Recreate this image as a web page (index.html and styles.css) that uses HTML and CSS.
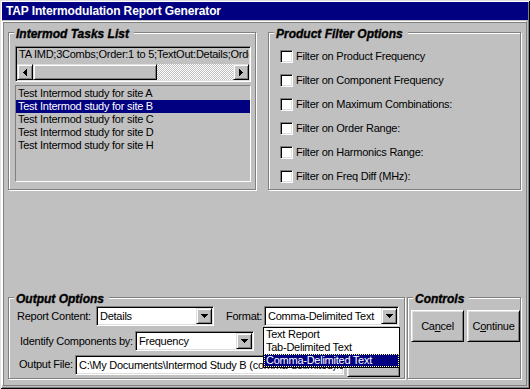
FILE: index.html
```html
<!DOCTYPE html>
<html>
<head>
<meta charset="utf-8">
<title>TAP Intermodulation Report Generator</title>
<link rel="stylesheet" href="styles.css">
</head>
<body>
<div class="window">
  <div class="titlebar">TAP Intermodulation Report Generator</div>
  <div class="client">
    <div class="top-row">
      <section class="group tasks">
        <span class="legend">Intermod Tasks List</span>
        <div class="scrollbox">
          <div class="scrolltext">TA IMD;3Combs;Order:1 to 5;TextOut:Details;Order:Ascending</div>
          <div class="hscroll">
            <span class="sbtn"><svg width="4" height="7" viewBox="0 0 4 7"><path d="M3 0h1v7h-1zM2 1h1v5h-1zM1 2h1v3h-1zM0 3h1v1h-1z"/></svg></span>
            <span class="thumb"></span>
            <span class="track"></span>
            <span class="sbtn"><svg width="4" height="7" viewBox="0 0 4 7"><path d="M0 0h1v7h-1zM1 1h1v5h-1zM2 2h1v3h-1zM3 3h1v1h-1z"/></svg></span>
          </div>
        </div>
        <ul class="listbox">
          <li>Test Intermod study for site A</li>
          <li class="sel">Test Intermod study for site B</li>
          <li>Test Intermod study for site C</li>
          <li>Test Intermod study for site D</li>
          <li>Test Intermod study for site H</li>
        </ul>
      </section>
      <section class="group filters">
        <span class="legend">Product Filter Options</span>
        <ul class="checks">
          <li><span class="checkbox"></span>Filter on Product Frequency</li>
          <li><span class="checkbox"></span>Filter on Component Frequency</li>
          <li><span class="checkbox"></span>Filter on Maximum Combinations:</li>
          <li><span class="checkbox"></span>Filter on Order Range:</li>
          <li><span class="checkbox"></span>Filter on Harmonics Range:</li>
          <li><span class="checkbox"></span>Filter on Freq Diff (MHz):</li>
        </ul>
      </section>
    </div>
    <div class="bottom-row">
      <section class="group output">
        <span class="legend">Output Options</span>
        <div class="row row1">
          <span class="label lbl-content">Report Content:</span>
          <div class="combo combo-content"><span class="value">Details</span><span class="dbtn"><svg width="7" height="4" viewBox="0 0 7 4"><path d="M0 0h7v1H0zM1 1h5v1H1zM2 2h3v1H2zM3 3h1v1H3z"/></svg></span></div>
          <span class="label lbl-format">Format:</span>
          <div class="combo combo-format"><span class="value">Comma-Delimited Text</span><span class="dbtn"><svg width="7" height="4" viewBox="0 0 7 4"><path d="M0 0h7v1H0zM1 1h5v1H1zM2 2h3v1H2zM3 3h1v1H3z"/></svg></span>
            <ul class="dropdown">
              <li>Text Report</li>
              <li>Tab-Delimited Text</li>
              <li class="sel">Comma-Delimited Text</li>
            </ul>
          </div>
        </div>
        <div class="row row2">
          <span class="label lbl-ident">Identify Components by:</span>
          <div class="combo combo-ident"><span class="value">Frequency</span><span class="dbtn"><svg width="7" height="4" viewBox="0 0 7 4"><path d="M0 0h7v1H0zM1 1h5v1H1zM2 2h3v1H2zM3 3h1v1H3z"/></svg></span></div>
        </div>
        <div class="row row3">
          <span class="label lbl-file">Output File:</span>
          <div class="textbox"><span class="value">C:\My Documents\Intermod Study B (comma-delimited).txt</span></div>
          <button class="btn browse" type="button"></button>
        </div>
      </section>
      <section class="group controls">
        <span class="legend">Controls</span>
        <div class="buttons">
          <button class="btn" type="button">Ca<u>n</u>cel</button>
          <button class="btn" type="button">C<u>o</u>ntinue</button>
        </div>
      </section>
    </div>
  </div>
</div>
</body>
</html>
```
FILE: styles.css
```css
* { box-sizing: border-box; }
html, body { margin: 0; padding: 0; }
body {
  width: 530px; height: 389px; overflow: hidden;
  background: #c0c0c0;
  font-family: "Liberation Sans", Arial, sans-serif;
  font-size: 11px; letter-spacing: -0.25px; color: #000;
}
ul { list-style: none; margin: 0; padding: 0; }

.window {
  width: 530px; height: 389px; padding: 2px;
  display: flex; flex-direction: column;
  background: #c0c0c0;
  box-shadow: inset 1px 1px 0 #dfdfdf, inset -1px -1px 0 #000,
              inset 2px 2px 0 #fff, inset -2px -2px 0 #808080;
}
.titlebar {
  height: 18px; flex: none;
  background: #000080; color: #fff;
  font-weight: bold; font-size: 12px; letter-spacing: -0.13px;
  line-height: 18px; padding-left: 4px; white-space: nowrap;
}
.client {
  flex: 1;
  margin: 1px 1px 1px 0;
  border: 1px solid; border-color: #fff #808080 #808080 #fff;
  box-shadow: inset 1px 1px 0 #808080;
  padding: 10px 5px 6px 5px;
  display: flex; flex-direction: column; justify-content: space-between;
}

/* group boxes */
.group {
  position: relative;
  border: 1px solid #808080;
  box-shadow: 1px 1px 0 #fff, inset 1px 1px 0 #fff;
}
.legend {
  position: absolute; top: -6px; left: 5px;
  background: #c0c0c0;
  padding: 0 5px 0 2px;
  font-weight: bold; font-style: italic; font-size: 12px;
  letter-spacing: 0; line-height: 14px;
  -webkit-text-stroke: 0.35px #000;
  white-space: nowrap;
}
.top-row { display: grid; grid-template-columns: 248px 253px; column-gap: 12px; }
.top-row .group { height: 158px; }
.bottom-row { display: grid; grid-template-columns: 397px 114px; column-gap: 2px; }
.bottom-row .group { height: 82px; }

/* sunken / raised helpers */
.scrollbox, .combo, .textbox, .checkbox {
  border: 1px solid; border-color: #808080 #fff #fff #808080;
  box-shadow: inset 1px 1px 0 #000, inset -1px -1px 0 #dfdfdf;
  padding: 1px;
}
.sbtn, .thumb, .dbtn {
  border: 1px solid; border-color: #dfdfdf #000 #000 #dfdfdf;
  box-shadow: inset 1px 1px 0 #fff, inset -1px -1px 0 #808080;
  background: #c0c0c0;
}

/* tasks list */
.scrollbox { margin: 13px 0 0 6px; width: 236px; height: 36px; }
.scrolltext {
  height: 16px; line-height: 13px; padding-left: 2px;
  white-space: nowrap; overflow: hidden;
}
.hscroll { display: flex; height: 16px; }
.sbtn {
  flex: none; width: 16px; height: 16px;
  display: flex; align-items: center; justify-content: center;
}
.sbtn svg, .dbtn svg { display: block; shape-rendering: crispEdges; }
.thumb { flex: none; width: 124px; height: 16px; }
.track {
  flex: 1; height: 16px;
  background: repeating-conic-gradient(#fff 0 25%, #c0c0c0 0 50%) 0 0 / 2px 2px;
}
.listbox {
  margin: 3px 0 0 6px; width: 236px; height: 97px;
  border: 1px solid; border-color: #808080 #fff #fff #808080;
  padding-top: 1px;
}
.listbox li { height: 13px; line-height: 13px; padding-left: 2px; white-space: nowrap; }
.listbox li.sel { background: #000080; color: #fff; }

/* filters */
.checks { padding: 17px 0 0 11px; }
.checks li {
  display: flex; align-items: center; gap: 3px;
  height: 13px; line-height: 13px; margin-bottom: 11px; white-space: nowrap;
}
.checkbox { flex: none; width: 13px; height: 13px; background: #fff; }

/* output options */
.output { padding: 8px 0 0 0; }
.row { display: flex; align-items: center; height: 20px; }
.row2 { margin-top: 5px; }
.row3 { margin-top: 4px; align-items: flex-start; }
.label { flex: none; line-height: 13px; white-space: nowrap; }
.row3 .label { margin-top: 3px; }
.lbl-content { margin-left: 8px; width: 79px; }
.lbl-format { margin-left: 12px; width: 38px; }
.lbl-ident { margin-left: 11px; width: 115px; }
.lbl-file { margin-left: 10px; width: 56px; }

.combo {
  position: relative; flex: none;
  height: 20px; background: #fff;
  display: flex; align-items: stretch;
}
.combo .value {
  flex: 1; padding-left: 2px; line-height: 16px;
  white-space: nowrap; overflow: hidden;
}
.dbtn {
  flex: none; width: 16px; height: 16px;
  display: flex; align-items: center; justify-content: center;
}
.combo-content { width: 118px; }
.combo-format { width: 135px; }
.combo-ident { width: 119px; }

.textbox { flex: none; width: 269px; height: 20px; background: #fff; overflow: hidden; }
.textbox .value { display: block; padding-left: 2px; line-height: 16px; white-space: nowrap; }

.dropdown {
  position: absolute; top: 20px; left: -2px; width: 137px;
  background: #fff; border: 1px solid #000; z-index: 2;
}
.dropdown li { height: 13px; line-height: 13px; padding-left: 2px; white-space: nowrap; }
.dropdown li.sel { background: #000080; color: #fff; outline: 1px dotted #ffff80; outline-offset: -1px; }

/* buttons */
.btn {
  font-family: inherit; font-size: 11px; letter-spacing: -0.25px; color: #000;
  background: #c0c0c0; padding: 0; margin: 0;
  border: 1px solid; border-color: #fff #000 #000 #fff;
  box-shadow: inset 1px 1px 0 #dfdfdf, inset -1px -1px 0 #808080;
}
.browse { margin-left: 3px; width: 53px; height: 22px; }
.controls { padding: 12px 0 0 3px; }
.buttons { display: flex; gap: 3px; }
.buttons .btn { width: 53px; height: 32px; }
```
